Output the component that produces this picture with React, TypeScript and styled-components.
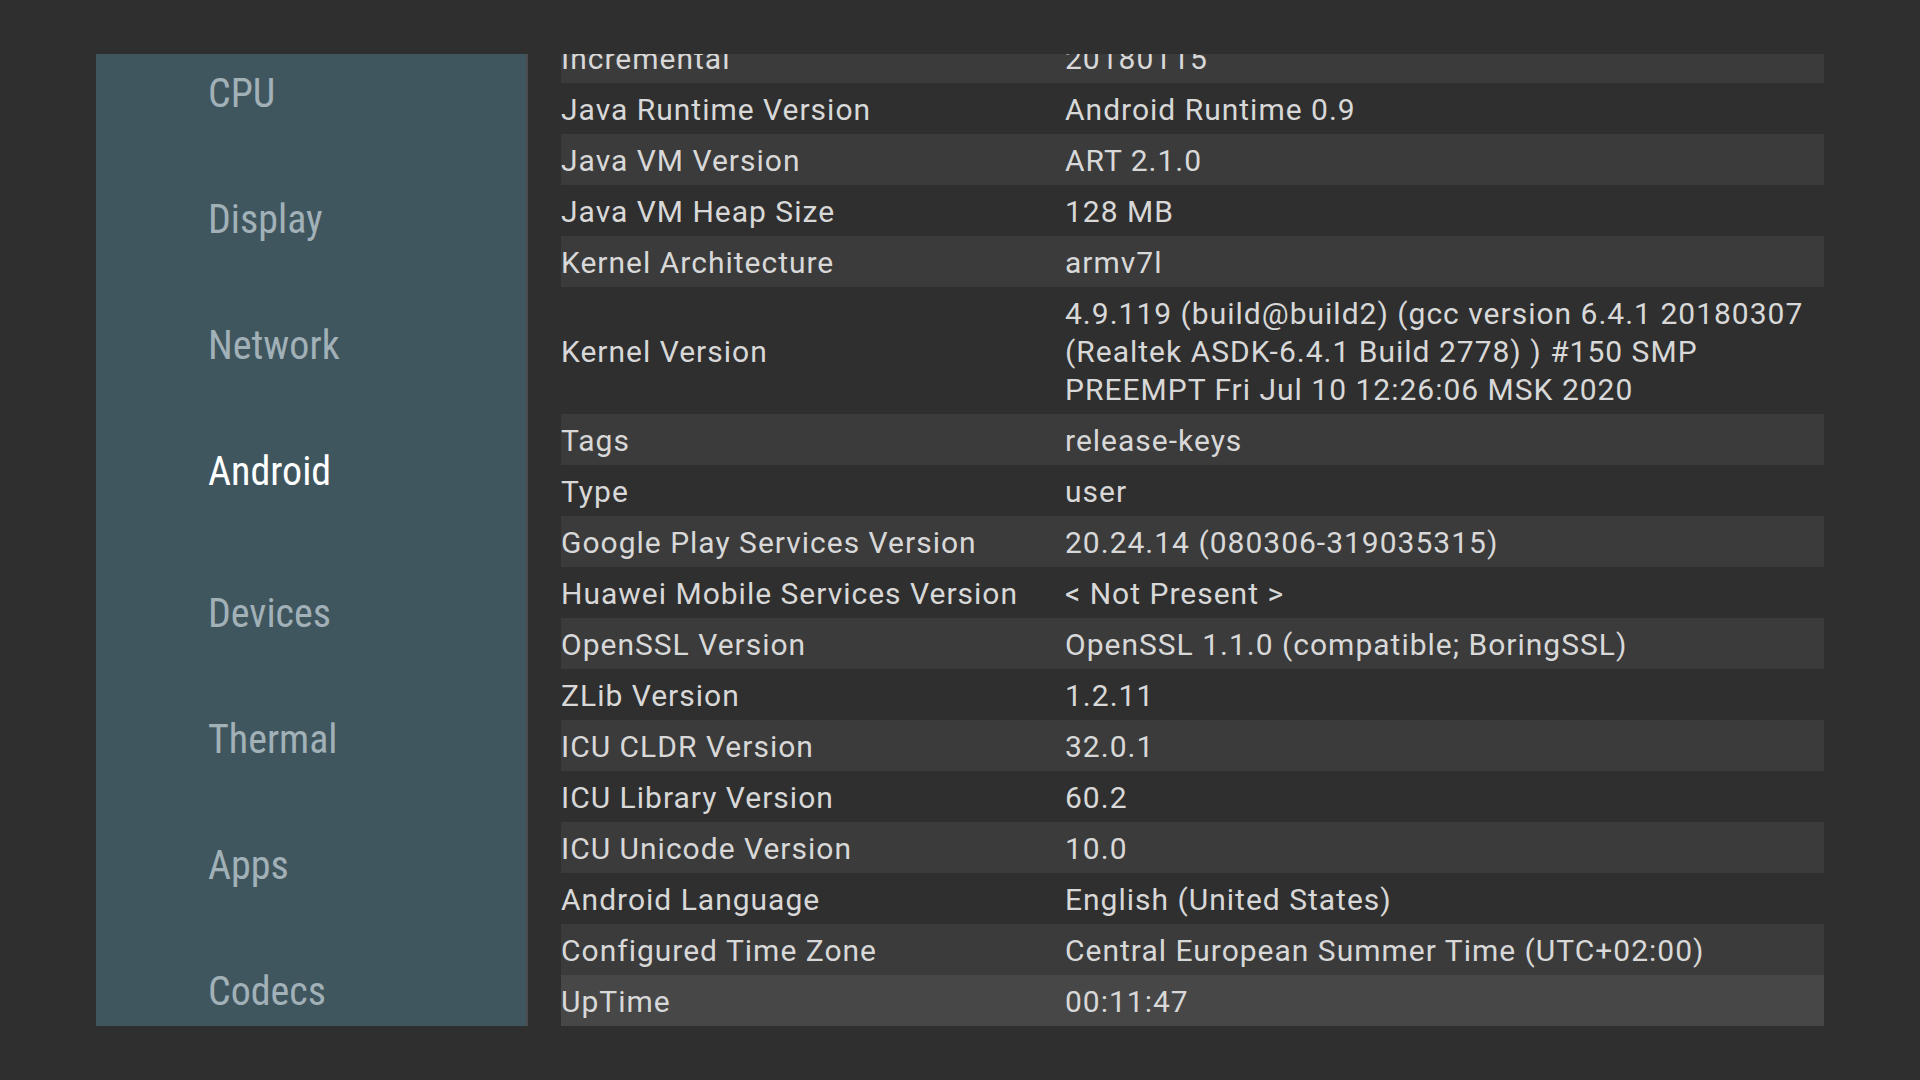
import React from "react";
import styled, { createGlobalStyle } from "styled-components";

const Global = createGlobalStyle`
  html, body { margin: 0; padding: 0; background: #2f2f2f; }
  body { width: 1920px; height: 1080px; overflow: hidden; }
`;

const FONT = `Roboto, "Noto Sans", sans-serif`;

const Page = styled.div`
  width: 1920px;
  height: 1080px;
  box-sizing: border-box;
  padding: 54px 96px 0 96px;
  display: flex;
  align-items: flex-start;
  gap: 33px;
  background: #2f2f2f;
  font-family: ${FONT};
`;

const Sidebar = styled.nav`
  width: 432px;
  height: 972px;
  box-sizing: border-box;
  background: #40565f;
  border-right: 2px solid #4a4c4d;
  overflow: hidden;
  display: flex;
  flex-direction: column;
`;

const NavItem = styled.div<{ $active?: boolean }>`
  flex: none;
  height: ${(p) => (p.$active ? 142 : 126)}px;
  box-sizing: border-box;
  padding: 15px 0 0 112px;
  font-size: 40px;
  font-stretch: 75%;
  line-height: 50px;
  color: ${(p) => (p.$active ? "#ffffff" : "#a1b1b7")};
`;

const Table = styled.div`
  width: 1263px;
  height: 972px;
  overflow: hidden;
  display: flex;
  flex-direction: column;
  justify-content: flex-end;
`;

const Row = styled.div<{ $tone: 0 | 1 | 2 }>`
  flex: none;
  display: grid;
  grid-template-columns: 504px 1fr;
  align-items: center;
  padding: 8px 0 5px;
  font-size: 30px;
  font-stretch: 100%;
  letter-spacing: 1px;
  line-height: 38px;
  color: #d8d8d8;
  background: ${(p) => (p.$tone === 2 ? "#474747" : p.$tone === 1 ? "#3b3b3b" : "transparent")};
`;

const Cell = styled.div`
  white-space: pre;
`;

const nav = ["CPU", "Display", "Network", "Android", "Devices", "Thermal", "Apps", "Codecs"];

const rows: [string, string][] = [
  ["Incremental", "20180115"],
  ["Java Runtime Version", "Android Runtime 0.9"],
  ["Java VM Version", "ART 2.1.0"],
  ["Java VM Heap Size", "128 MB"],
  ["Kernel Architecture", "armv7l"],
  [
    "Kernel Version",
    "4.9.119 (build@build2) (gcc version 6.4.1 20180307\n(Realtek ASDK-6.4.1 Build 2778) ) #150 SMP\nPREEMPT Fri Jul 10 12:26:06 MSK 2020",
  ],
  ["Tags", "release-keys"],
  ["Type", "user"],
  ["Google Play Services Version", "20.24.14 (080306-319035315)"],
  ["Huawei Mobile Services Version", "< Not Present >"],
  ["OpenSSL Version", "OpenSSL 1.1.0 (compatible; BoringSSL)"],
  ["ZLib Version", "1.2.11"],
  ["ICU CLDR Version", "32.0.1"],
  ["ICU Library Version", "60.2"],
  ["ICU Unicode Version", "10.0"],
  ["Android Language", "English (United States)"],
  ["Configured Time Zone", "Central European Summer Time (UTC+02:00)"],
  ["UpTime", "00:11:47"],
];

export default function App() {
  return (
    <>
      <Global />
      <Page>
        <Sidebar>
          {nav.map((n) => (
            <NavItem key={n} $active={n === "Android"}>
              {n}
            </NavItem>
          ))}
        </Sidebar>
        <Table>
          {rows.map(([k, v], i) => (
            <Row key={k} $tone={i === rows.length - 1 ? 2 : i % 2 === 0 ? 1 : 0}>
              <Cell>{k}</Cell>
              <Cell>{v}</Cell>
            </Row>
          ))}
        </Table>
      </Page>
    </>
  );
}
